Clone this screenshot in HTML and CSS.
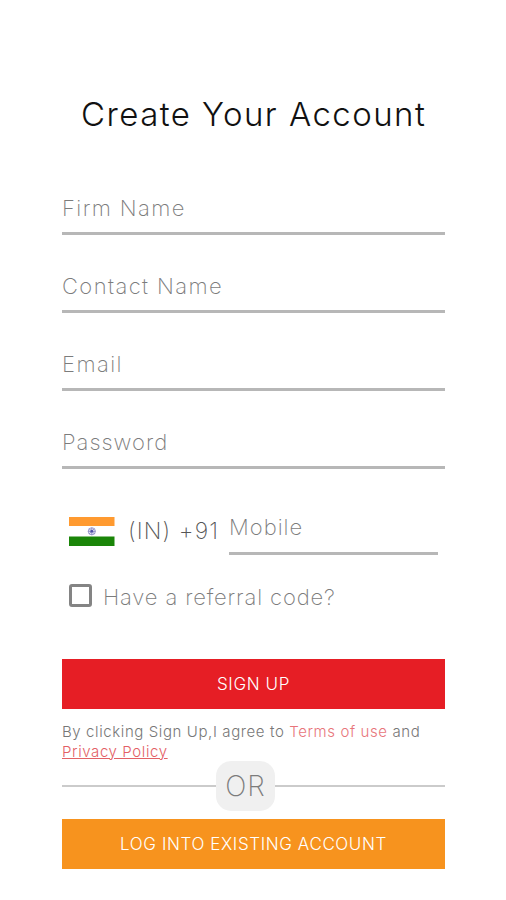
FILE: index.html
```html
<!DOCTYPE html>
<html lang="en">
<head>
<meta charset="utf-8">
<title>Create Your Account</title>
<link rel="stylesheet" href="styles.css">
</head>
<body>
<main class="page">
  <h1 class="title">Create Your Account</h1>
  <form class="form">
    <div class="field wide"><span>Firm Name</span></div>
    <div class="field wide"><span>Contact Name</span></div>
    <div class="field wide"><span>Email</span></div>
    <div class="field"><span>Password</span></div>
    <div class="phone">
      <svg class="flag" viewBox="0 0 46 30" width="46" height="30">
        <rect width="46" height="30" fill="#fff"/>
        <rect width="45.5" height="9" fill="#ff9a30"/>
        <rect y="19.5" width="45.5" height="9.5" fill="#1a8508"/>
        <circle cx="22.8" cy="14.3" r="3.6" fill="#e8e8f6" stroke="#a2a2d2" stroke-width="1"/>
        <path d="M22.8 10.7v7.2M19.2 14.3h7.2M20.3 11.8l5 5M25.3 11.8l-5 5" stroke="#6a6ab4" stroke-width=".7"/>
        <circle cx="22.8" cy="14.3" r="1.3" fill="#4f4fa6"/>
      </svg>
      <span class="code">(IN) +91</span>
      <div class="mobile"><span>Mobile</span></div>
    </div>
    <div class="referral">
      <span class="checkbox"></span>
      <span class="question">Have a referral code?</span>
    </div>
    <div class="button signup"><span>SIGN UP</span></div>
    <p class="terms">By clicking Sign Up,I agree to <a class="use">Terms of use</a> and<br><a class="privacy">Privacy Policy</a></p>
    <div class="divider"><span class="or">OR</span></div>
    <div class="button login"><span>LOG INTO EXISTING ACCOUNT</span></div>
  </form>
</main>
</body>
</html>
```
FILE: styles.css
```css
* { box-sizing: border-box; }
body {
  margin: 0;
  background: #fff;
  font-family: Inter, "Open Sans", sans-serif;
  font-weight: 200;
  color: #7c7c7c;
}
.page { width: 506px; height: 900px; padding: 94px 61px 0 62px; }
.title {
  margin: 0 0 59px;
  padding-left: 19px;
  font-size: 33px;
  line-height: 40px;
  font-weight: 300;
  letter-spacing: 1.45px;
  color: #111;
  white-space: nowrap;
}
.form { white-space: nowrap; }
.field {
  height: 78px;
  font-size: 22px;
  line-height: 30px;
  letter-spacing: 1px;
}
.wide { letter-spacing: 1.4px; }
.field::after {
  content: "";
  display: block;
  height: 3px;
  margin-top: 9px;
  background: #b7b7b7;
}
.phone {
  display: flex;
  height: 50px;
  padding: 0 7px;
  font-size: 22px;
  line-height: 30px;
}
.flag { margin-top: 12px; flex: none; }
.code {
  width: 101px;
  margin: 11px 0 0 13px;
  font-size: 23px;
  letter-spacing: 1.1px;
  color: #555;
}
.mobile {
  flex: 1;
  height: 50px;
  padding-top: 7px;
  border-bottom: 3px solid #b7b7b7;
  letter-spacing: 1px;
}
.referral {
  display: flex;
  margin-top: 27px;
  padding-left: 7px;
  font-size: 22px;
  line-height: 30px;
  letter-spacing: .85px;
}
.checkbox {
  width: 23px;
  height: 23px;
  margin: 2px 11px 0 0;
  border: 3px solid #848484;
  border-radius: 3px;
}
.button {
  height: 50px;
  display: flex;
  align-items: center;
  justify-content: center;
  color: #fff;
  font-size: 17px;
  font-weight: 300;
  letter-spacing: .6px;
}
.signup { margin-top: 47px; background: #e61e25; }
.terms {
  margin: 13px 0 0;
  font-size: 15px;
  line-height: 20px;
  font-weight: 300;
  letter-spacing: .6px;
  color: #777;
}
.use { color: #e8757a; }
.privacy { color: #e36065; text-decoration: underline; }
.divider {
  display: flex;
  align-items: center;
  height: 50px;
  margin-top: -1px;
}
.divider::before, .divider::after { content: ""; height: 2px; background: #cbcbcb; }
.divider::before { width: 154px; }
.divider::after { flex: 1; }
.or {
  width: 59px;
  height: 50px;
  border-radius: 15px;
  background: #f0f0f0;
  font-size: 28px;
  line-height: 50px;
  letter-spacing: 1px;
  text-align: center;
}
.login { margin-top: 8px; background: #f7931e; }
```
